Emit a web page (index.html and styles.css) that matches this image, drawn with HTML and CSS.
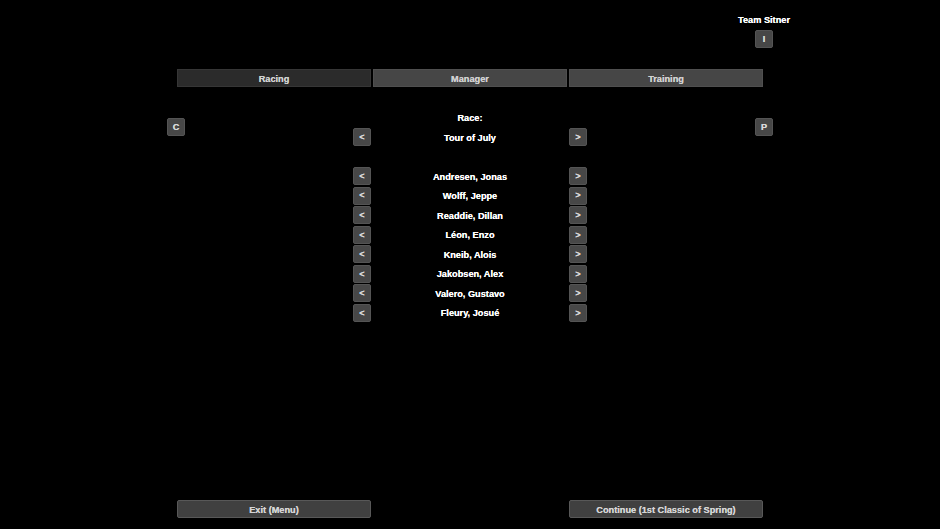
FILE: index.html
```html
<!DOCTYPE html>
<html>
<head>
<meta charset="utf-8">
<link rel="stylesheet" href="styles.css">
</head>
<body>
<div class="screen">
  <div class="wrap">
    <div class="header">
      <div class="team">
        <div class="team-name">Team Sitner</div>
        <div class="sq">I</div>
      </div>
    </div>
    <div class="tabs">
      <div class="tab tab-dark">Racing</div>
      <div class="tab">Manager</div>
      <div class="tab">Training</div>
    </div>
    <div class="section">
      <div class="sq side">C</div>
      <div class="center">
        <div class="label">Race:</div>
        <div class="row"><div class="sq">&lt;</div><div class="name">Tour of July</div><div class="sq">&gt;</div></div>
        <div class="riders">
          <div class="row"><div class="sq">&lt;</div><div class="name">Andresen, Jonas</div><div class="sq">&gt;</div></div>
          <div class="row"><div class="sq">&lt;</div><div class="name">Wolff, Jeppe</div><div class="sq">&gt;</div></div>
          <div class="row"><div class="sq">&lt;</div><div class="name">Readdie, Dillan</div><div class="sq">&gt;</div></div>
          <div class="row"><div class="sq">&lt;</div><div class="name">Léon, Enzo</div><div class="sq">&gt;</div></div>
          <div class="row"><div class="sq">&lt;</div><div class="name">Kneib, Alois</div><div class="sq">&gt;</div></div>
          <div class="row"><div class="sq">&lt;</div><div class="name">Jakobsen, Alex</div><div class="sq">&gt;</div></div>
          <div class="row"><div class="sq">&lt;</div><div class="name">Valero, Gustavo</div><div class="sq">&gt;</div></div>
          <div class="row"><div class="sq">&lt;</div><div class="name">Fleury, Josué</div><div class="sq">&gt;</div></div>
        </div>
      </div>
      <div class="sq side">P</div>
    </div>
    <div class="footer">
      <div class="btn">Exit (Menu)</div>
      <div class="btn">Continue (1st Classic of Spring)</div>
    </div>
  </div>
</div>
</body>
</html>
```
FILE: styles.css
```css
html, body {
  margin: 0;
  padding: 0;
  background: #000;
}
body {
  font-family: "Liberation Sans", Arial, sans-serif;
  font-weight: bold;
  font-size: 9.2px;
  color: #fff;
  text-shadow: 0 0 0.4px currentColor;
}
.screen {
  width: 940px;
  height: 529px;
  overflow: hidden;
}
.wrap {
  width: 606px;
  height: 529px;
  margin: 0 auto;
  display: flex;
  flex-direction: column;
}
.header {
  display: flex;
  justify-content: flex-end;
  padding-top: 14px;
}
.team {
  width: 18px;
  display: flex;
  flex-direction: column;
  align-items: center;
}
.team-name {
  white-space: nowrap;
  line-height: 12px;
  height: 12px;
  margin-bottom: 4px;
}
.sq {
  width: 18px;
  height: 18px;
  box-sizing: border-box;
  padding-top: 1px;
  background: #474747;
  border: 1px solid #545454;
  border-radius: 2px;
  color: #d8d8d8;
  display: flex;
  align-items: center;
  justify-content: center;
  line-height: 1;
  flex: none;
}
.tabs {
  margin: 21px 10px 0;
  display: flex;
  gap: 2px;
}
.tab {
  width: 194px;
  height: 18px;
  box-sizing: border-box;
  padding-top: 1px;
  background: #464646;
  border: 1px solid #4f4f4f;
  color: #d0d0d0;
  display: flex;
  align-items: center;
  justify-content: center;
}
.tab-dark {
  background: #2b2b2b;
  border-color: #363636;
}
.section {
  margin-top: 25px;
  display: flex;
  justify-content: space-between;
  align-items: flex-start;
}
.side {
  margin-top: 6px;
}
.center {
  display: flex;
  flex-direction: column;
  align-items: center;
}
.label {
  height: 12px;
  line-height: 12px;
  margin-bottom: 4px;
}
.row {
  display: flex;
  gap: 2px;
  height: 18px;
}
.name {
  width: 194px;
  padding-top: 1px;
  display: flex;
  align-items: center;
  justify-content: center;
}
.riders {
  margin-top: 21px;
  display: flex;
  flex-direction: column;
  gap: 1.57px;
}
.footer {
  margin: auto 10px 0;
  padding-bottom: 11px;
  display: flex;
  justify-content: space-between;
}
.btn {
  width: 194px;
  height: 18px;
  box-sizing: border-box;
  padding-top: 1px;
  background: #404040;
  border: 1px solid #585858;
  border-radius: 2px;
  color: #d4d4d4;
  display: flex;
  align-items: center;
  justify-content: center;
}
```
